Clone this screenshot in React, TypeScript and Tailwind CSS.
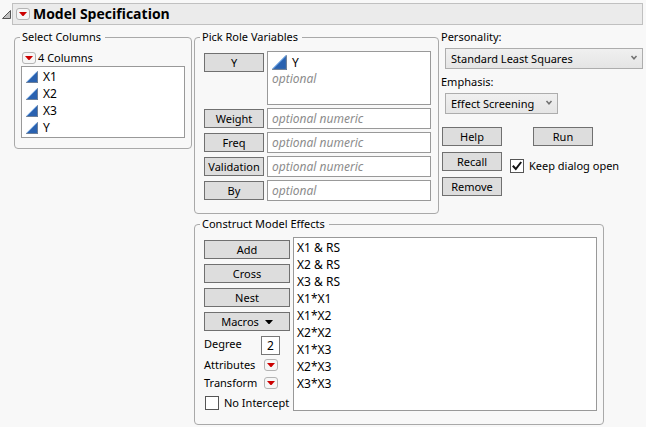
import { useState } from "react";
import type { ReactNode } from "react";

const columns = ["X1", "X2", "X3", "Y"];

const roles = [
  { name: "Weight", hint: "optional numeric" },
  { name: "Freq", hint: "optional numeric" },
  { name: "Validation", hint: "optional numeric" },
  { name: "By", hint: "optional" },
];

const effects = [
  "X1 & RS",
  "X2 & RS",
  "X3 & RS",
  "X1*X1",
  "X1*X2",
  "X2*X2",
  "X1*X3",
  "X2*X3",
  "X3*X3",
];

function Group({
  title,
  className = "",
  children,
}: {
  title: string;
  className?: string;
  children: ReactNode;
}) {
  return (
    <fieldset
      className={`min-w-0 rounded border border-[#a9a9a9] px-[5px] ${className}`}>
      <legend className="pl-0.5 pr-1 leading-4">{title}</legend>
      {children}
    </fieldset>
  );
}

function PushButton({
  className = "",
  children,
}: {
  className?: string;
  children: ReactNode;
}) {
  return (
    <button
      type="button"
      className={`flex h-[19px] shrink-0 items-center justify-center border border-[#707070] bg-[#dddddd] leading-4 ${className}`}>
      {children}
    </button>
  );
}

function RedTriangle({ label }: { label: string }) {
  return (
    <button
      type="button"
      aria-label={label}
      className="flex h-3 w-3.5 shrink-0 items-center justify-center rounded-[3px] border border-[#b4b4b4] bg-[#f6f6f6]">
      <svg width="8" height="4" viewBox="0 0 8 4">
        <path d="M0 0h8L4.5 4h-1z" fill="#cc0000" />
      </svg>
    </button>
  );
}

// Blue wedge shown beside continuous variables
function ContinuousIcon({ size = 12 }: { size?: number }) {
  return (
    <svg className="shrink-0" width={size} height={size} viewBox="0 0 12 12">
      <path d="M0 12L12 0v12z" fill="#2a62b0" />
      <path d="M0.5 11.3L11.3 0.5" stroke="#5590d8" strokeWidth="1" />
      <path d="M0 11.5h11.5V0.5" fill="none" stroke="#7f8894" strokeWidth="0.8" />
    </svg>
  );
}

function DropDown({
  id,
  value,
  className = "",
}: {
  id: string;
  value: string;
  className?: string;
}) {
  return (
    <div className={`relative ${className}`}>
      <select
        id={id}
        className="block h-[21px] w-full appearance-none border border-[#adadad] bg-linear-to-b from-[#f0f0f0] to-[#e5e5e5] pl-[5px] pr-4 leading-4">
        <option>{value}</option>
      </select>
      <svg
        className="pointer-events-none absolute right-[5px] top-[7px]"
        width="8"
        height="6"
        viewBox="0 0 8 6">
        <path d="M1.5 1L4 3.8 6.5 1" fill="none" stroke="#707070" strokeWidth="1.5" />
      </svg>
    </div>
  );
}

function CheckBox({ label, defaultChecked }: { label: string; defaultChecked?: boolean }) {
  const [checked, setChecked] = useState(!!defaultChecked);

  return (
    <label className="flex h-4 items-center gap-[5px] whitespace-nowrap leading-4">
      <span className="relative h-3.5 w-3.5 shrink-0">
        <input
          type="checkbox"
          checked={checked}
          onChange={(e) => setChecked(e.target.checked)}
          className="block h-3.5 w-3.5 appearance-none border border-[#555555] bg-white"
        />
        {checked && (
          <svg
            className="pointer-events-none absolute inset-0"
            width="14"
            height="14"
            viewBox="0 0 14 14">
            <path d="M2.8 6.8L5.8 10 11.2 3" fill="none" stroke="#111111" strokeWidth="2" />
          </svg>
        )}
      </span>
      {label}
    </label>
  );
}

export default function App() {
  return (
    <main className="min-h-screen bg-[#f8f8f8] pb-0.5 pl-0.5 pr-[3px] pt-[3px] font-['Noto_Sans','Open_Sans',sans-serif] text-[11px] text-black">
      <header className="flex items-center">
        <button type="button" aria-label="Collapse outline" className="w-2.5 shrink-0">
          <svg width="9" height="9" viewBox="0 0 9 9">
            <path d="M0.5 8.5h8v-8z" fill="#c0c0c0" stroke="#555555" />
          </svg>
        </button>
        <div className="flex h-[22px] flex-1 items-center gap-[3px] border border-[#c0c0c0] bg-[#ebebeb] pl-[3px]">
          <RedTriangle label="Model Specification options" />
          <h1 className="font-['Open_Sans','Noto_Sans',sans-serif] text-[14px] font-bold leading-5">
            Model Specification
          </h1>
        </div>
      </header>

      <div className="mt-1 flex items-start gap-0.5 pl-3">
        <Group title="Select Columns" className="w-[178px] shrink-0 pb-2.5 pt-[5px]">
          <div className="px-px">
            <div className="flex h-4 items-center gap-0.5 pl-px">
              <RedTriangle label="Columns options" />
              <span>4 Columns</span>
            </div>
            <ul className="border border-[#999999] bg-white px-1 py-px">
              {columns.map((name) => (
                <li
                  key={name}
                  className="flex h-[17px] items-center gap-[5px] text-[12px] leading-4">
                  <ContinuousIcon />
                  {name}
                </li>
              ))}
            </ul>
          </div>
        </Group>

        <div className="flex min-w-0 flex-1 flex-col gap-0.5">
          <div className="flex items-start gap-0.5">
            <Group title="Pick Role Variables" className="flex-1 pb-3 pt-1.5">
              <div className="flex flex-col gap-[3px] pl-1 pr-0.5">
                <div className="flex items-start gap-[3px]">
                  <PushButton className="mt-0.5 w-[60px]">Y</PushButton>
                  <div className="h-[54px] flex-1 border border-[#999999] bg-white px-1 py-0.5">
                    <div className="flex h-[17px] items-center gap-[5px] text-[12px] leading-4">
                      <ContinuousIcon size={15} />
                      Y
                    </div>
                    <p className="text-[12px] italic leading-4 text-[#8c8c8c]">optional</p>
                  </div>
                </div>
                {roles.map((role) => (
                  <div key={role.name} className="flex items-center gap-[3px]">
                    <PushButton className="w-[60px]">{role.name}</PushButton>
                    <input
                      type="text"
                      aria-label={role.name}
                      placeholder={role.hint}
                      className="h-[21px] min-w-0 flex-1 border border-[#999999] bg-white px-1 text-[12px] leading-4 placeholder:italic placeholder:text-[#8c8c8c]"
                    />
                  </div>
                ))}
              </div>
            </Group>

            <div className="w-[202px] shrink-0">
              <label htmlFor="personality" className="mb-[3px] block leading-4">
                Personality:
              </label>
              <DropDown id="personality" value="Standard Least Squares" className="ml-1" />
              <label htmlFor="emphasis" className="mb-[3px] mt-[5px] block leading-4">
                Emphasis:
              </label>
              <DropDown id="emphasis" value="Effect Screening" className="ml-1 w-[113px]" />
              <div className="mt-[13px] flex gap-2 pl-px">
                <div className="flex flex-col gap-1.5">
                  <PushButton className="w-[60px]">Help</PushButton>
                  <PushButton className="w-[60px]">Recall</PushButton>
                  <PushButton className="w-[60px]">Remove</PushButton>
                </div>
                <div className="flex flex-col gap-3">
                  <PushButton className="ml-[23px] w-[60px]">Run</PushButton>
                  <CheckBox label="Keep dialog open" defaultChecked />
                </div>
              </div>
            </div>
          </div>

          <Group title="Construct Model Effects" className="mr-[39px] pb-[13px] pt-[5px]">
            <div className="flex gap-[3px] pl-1 pr-px">
              <div className="w-[86px] shrink-0 pt-[3px]">
                <div className="flex flex-col gap-[5px]">
                  <PushButton>Add</PushButton>
                  <PushButton>Cross</PushButton>
                  <PushButton>Nest</PushButton>
                  <PushButton className="gap-1.5">
                    Macros
                    <svg width="8" height="4" viewBox="0 0 8 4">
                      <path d="M0 0h8L4.5 4h-1z" fill="#000000" />
                    </svg>
                  </PushButton>
                  <div className="flex items-start justify-between pr-2.5">
                    <label htmlFor="degree" className="leading-4">
                      Degree
                    </label>
                    <input
                      id="degree"
                      type="text"
                      defaultValue="2"
                      className="h-[19px] w-[19px] border border-[#777777] bg-white text-center text-[12px] leading-4"
                    />
                  </div>
                </div>
                <div className="mt-0.5 flex flex-col gap-0.5 pr-3">
                  <div className="flex h-4 items-center justify-between">
                    <span>Attributes</span>
                    <RedTriangle label="Attributes" />
                  </div>
                  <div className="flex h-4 items-center justify-between">
                    <span>Transform</span>
                    <RedTriangle label="Transform" />
                  </div>
                </div>
                <div className="mt-1 pl-px">
                  <CheckBox label="No Intercept" />
                </div>
              </div>
              <ul className="min-w-0 flex-1 border border-[#999999] bg-white px-[3px] py-px text-[12px]">
                {effects.map((effect) => (
                  <li key={effect} className="leading-[17px]">
                    {effect}
                  </li>
                ))}
              </ul>
            </div>
          </Group>
        </div>
      </div>
    </main>
  );
}
